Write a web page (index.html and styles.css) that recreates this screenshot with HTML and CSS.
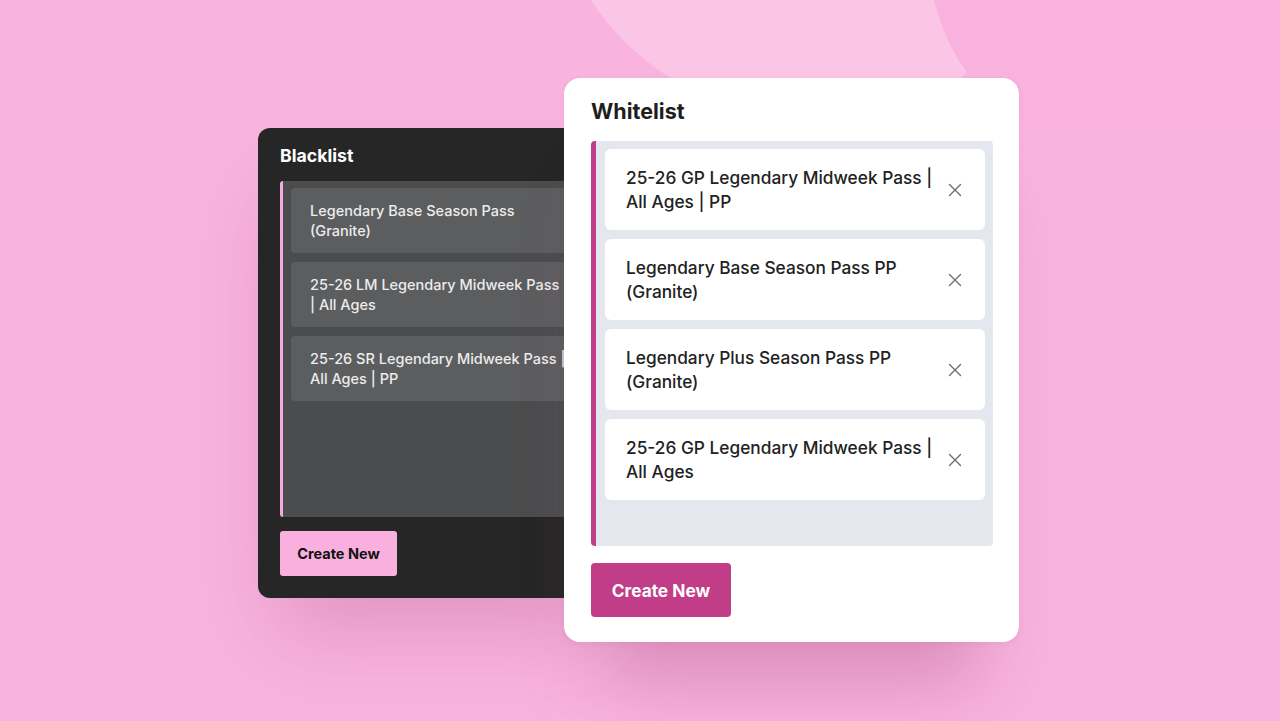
FILE: index.html
```html
<!DOCTYPE html>
<html lang="en">
<head>
<meta charset="utf-8">
<title>Blacklist / Whitelist</title>
<link rel="stylesheet" href="styles.css">
</head>
<body>
<div class="bg-blob blob-light"></div>
<div class="bg-blob blob-right"></div>
<main class="stage">
  <section class="card card-dark">
    <h2 class="card-title">Blacklist</h2>
    <div class="list list-dark">
      <div class="item item-dark">Legendary Base Season Pass (Granite)</div>
      <div class="item item-dark">25-26 LM Legendary Midweek Pass | All Ages</div>
      <div class="item item-dark">25-26 SR Legendary Midweek Pass | All Ages | PP</div>
    </div>
    <button class="btn btn-pink">Create New</button>
  </section>

  <section class="card card-light">
    <h2 class="card-title">Whitelist</h2>
    <div class="list list-light">
      <div class="item item-light">
        <span class="item-text">25-26 GP Legendary Midweek Pass | All Ages | PP</span>
        <svg class="x-icon" viewBox="0 0 14 14" width="14" height="14"><path d="M1.5 1.5L12.5 12.5M12.5 1.5L1.5 12.5"/></svg>
      </div>
      <div class="item item-light">
        <span class="item-text">Legendary Base Season Pass PP (Granite)</span>
        <svg class="x-icon" viewBox="0 0 14 14" width="14" height="14"><path d="M1.5 1.5L12.5 12.5M12.5 1.5L1.5 12.5"/></svg>
      </div>
      <div class="item item-light">
        <span class="item-text">Legendary Plus Season Pass PP (Granite)</span>
        <svg class="x-icon" viewBox="0 0 14 14" width="14" height="14"><path d="M1.5 1.5L12.5 12.5M12.5 1.5L1.5 12.5"/></svg>
      </div>
      <div class="item item-light">
        <span class="item-text">25-26 GP Legendary Midweek Pass | All Ages</span>
        <svg class="x-icon" viewBox="0 0 14 14" width="14" height="14"><path d="M1.5 1.5L12.5 12.5M12.5 1.5L1.5 12.5"/></svg>
      </div>
    </div>
    <button class="btn btn-magenta">Create New</button>
  </section>
</main>
</body>
</html>
```

FILE: styles.css
```css
* { box-sizing: border-box; }

html, body {
  margin: 0;
  padding: 0;
  width: 1280px;
  height: 721px;
  overflow: hidden;
}

body {
  position: relative;
  background: #f8b4de;
  font-family: Inter, "Noto Sans", sans-serif;
}

.bg-blob {
  position: absolute;
  pointer-events: none;
}

.blob-light {
  left: 545px;
  top: -420px;
  width: 540px;
  height: 540px;
  border-radius: 50%;
  background: #fbc5e6;
}

.blob-right {
  left: 927px;
  top: -60px;
  width: 400px;
  height: 190px;
  border-bottom-left-radius: 140px 190px;
  background: #f9b1dd;
}

.stage {
  position: relative;
  display: flex;
  align-items: flex-start;
  padding: 78px 0 0 258px;
}

.card {
  display: flex;
  flex-direction: column;
  align-items: flex-start;
}

.card-title {
  margin: 0;
  font-weight: 700;
}

/* Blacklist */
.card-dark {
  margin-top: 50px;
  width: 356px;
  height: 470px;
  padding: 17px 22px 22px 22px;
  background: #262626;
  border-radius: 12px;
  box-shadow: 0 50px 80px -20px rgba(170, 70, 130, 0.3);
}

.card-dark .card-title {
  color: #ffffff;
  font-size: 17.7px;
  line-height: 22px;
}

.list {
  align-self: stretch;
  display: flex;
  flex-direction: column;
}

.list-dark {
  margin-top: 14px;
  height: 336px;
  padding: 7px 8px;
  gap: 9px;
  background: #4b4c4d;
  border-left: 3px solid #f5a8d9;
  border-radius: 3px;
}

.item-dark {
  padding: 13px 18px 12px 19px;
  background: #5c5d5f;
  border-radius: 4px;
  color: #ececec;
  font-size: 14.5px;
  font-weight: 500;
  line-height: 20px;
}

.btn {
  border: none;
  font-family: inherit;
  font-weight: 700;
  cursor: pointer;
}

.btn-pink {
  margin-top: 14px;
  width: 117px;
  height: 45px;
  background: #f9b0df;
  color: #111111;
  font-size: 14.5px;
  border-radius: 3px;
}

/* Whitelist */
.card-light {
  margin-left: -50px;
  width: 455px;
  height: 564px;
  padding: 20px 26px 25px 27px;
  background: #ffffff;
  border-radius: 16px;
  box-shadow: 0 80px 70px -40px rgba(175, 80, 135, 0.4), 0 2px 6px rgba(120, 40, 90, 0.06);
}

.card-light .card-title {
  color: #1e1e1e;
  font-size: 21.5px;
  line-height: 26px;
}

.list-light {
  margin-top: 17px;
  height: 405px;
  padding: 8px 8px 8px 9px;
  gap: 9px;
  background: #e4e8ee;
  border-left: 5px solid #c13d89;
  border-radius: 4px;
}

.item-light {
  display: flex;
  align-items: center;
  gap: 12px;
  height: 81px;
  padding: 0 23px 0 21px;
  background: #ffffff;
  border-radius: 6px;
}

.item-text {
  flex: 1;
  color: #222222;
  font-size: 17.3px;
  font-weight: 500;
  line-height: 24px;
}

.x-icon {
  flex: none;
  fill: none;
  stroke: #6f6f6f;
  stroke-width: 1.4;
  stroke-linecap: round;
}

.btn-magenta {
  margin-top: 17px;
  width: 140px;
  height: 54px;
  background: #c13d87;
  color: #ffffff;
  font-size: 17.3px;
  border-radius: 4px;
}
```
